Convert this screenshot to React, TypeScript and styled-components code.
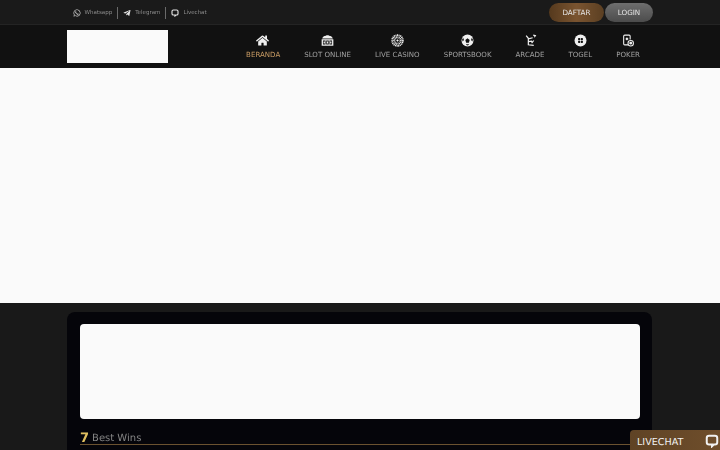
import React from 'react';
import styled, { createGlobalStyle } from 'styled-components';
import { FaWhatsapp, FaTelegramPlane, FaHome } from 'react-icons/fa';

const GlobalStyle = createGlobalStyle`
  html, body {
    margin: 0;
    padding: 0;
    height: 450px;
    overflow: hidden;
    background: #191919;
    font-family: "DejaVu Sans", sans-serif;
    text-rendering: geometricPrecision;
  }
  * { box-sizing: border-box; }
`;

const Page = styled.div`
  height: 450px;
  overflow: hidden;
  background: #191919;
`;

const TopBar = styled.div`
  height: 25px;
  background: #1a1a1a;
  border-bottom: 1px solid #242424;
  padding: 1px 67px 0 72.5px;
  display: flex;
  align-items: center;
  justify-content: space-between;
`;

const Contacts = styled.div`
  display: flex;
  align-items: center;
  will-change: opacity;
`;

const Contact = styled.a<{ $divider?: boolean }>`
  display: flex;
  align-items: center;
  gap: 4px;
  height: 12px;
  font-size: 5.5px;
  color: #8d8d8d;
  padding-right: 4.5px;
  margin-right: 5.5px;
  border-right: ${p => (p.$divider ? '1px solid #6a6a6a' : 'none')};
  svg { color: #e4e4e4; flex-shrink: 0; }
`;

const AuthButtons = styled.div`
  display: flex;
  align-items: center;
  gap: 1px;
  margin-top: -1px;
  will-change: opacity;
`;

const AuthButton = styled.button<{ $login?: boolean }>`
  width: ${p => (p.$login ? '48px' : '55px')};
  height: 19px;
  padding: 0;
  border: none;
  border-radius: 10px;
  font-family: inherit;
  font-size: 7.2px;
  color: #e6e6e6;
  background: ${p =>
    p.$login
      ? 'linear-gradient(180deg, #6e6e6e 0%, #4c4c4c 100%)'
      : 'linear-gradient(90deg, #55391d 0%, #7a5430 50%, #5b3f22 100%)'};
`;

const NavBar = styled.div`
  height: 43px;
  background: #111111;
  padding: 5px 68px 0 67px;
  display: flex;
  align-items: flex-start;
  justify-content: space-between;
`;

const Logo = styled.div`
  width: 101px;
  height: 33px;
  background: #fafafa;
`;

const NavList = styled.nav`
  display: flex;
  align-items: flex-start;
  margin-right: 12px;
  gap: 24px;
  will-change: opacity;
`;

const NavItem = styled.a<{ $active?: boolean }>`
  display: flex;
  flex-direction: column;
  align-items: center;
  gap: 3px;
  padding-top: 4px;
  font-size: 7.05px;
  line-height: 10px;
  white-space: nowrap;
  color: ${p => (p.$active ? '#c79a63' : '#a0a0a0')};
  svg { display: block; color: #efefef; }
`;

const HomeIcon = styled(FaHome)`
  margin-left: -2px;
`;

const Hero = styled.div`
  height: 235px;
  background: #fafafa;
`;

const Content = styled.main`
  padding: 9px 68px 0 67px;
`;

const Panel = styled.section`
  background: #05050a;
  border-radius: 8px;
  padding: 12px 12px 0 13px;
  height: 200px;
`;

const Banner = styled.div`
  height: 95px;
  background: #fafafa;
  border-radius: 4px;
`;

const SectionTitle = styled.h2`
  margin: 11px 0 0;
  padding-top: 3px;
  display: flex;
  align-items: center;
  gap: 3px;
  font-size: 10px;
  line-height: 11px;
  font-weight: 400;
  color: #858585;
  border-bottom: 1px solid #6b5230;
  will-change: opacity;
`;

const Seven = styled.span`
  font-size: 13px;
  font-weight: 700;
  color: #e0c060;
`;

const ChatTab = styled.div`
  position: fixed;
  right: 0;
  bottom: 0;
  width: 90px;
  height: 20px;
  padding: 5px 1px 0 7px;
  display: flex;
  align-items: center;
  justify-content: space-between;
  border-top-left-radius: 4px;
  background: linear-gradient(90deg, #5f4325 0%, #6f4e2b 100%);
  color: #f1f1f1;
  font-size: 9.6px;
  svg { margin-top: -3px; }
`;

const SlotIcon = () => (
  <svg width="13" height="13" viewBox="2 2 20 20" fill="currentColor">
    <path d="M4 8c3-5 13-5 16 0v1H4zM3 10h18v10H3zM10 4h4v2h-4z" />
    <path fill="#111" d="M5 12h4v6H5zM10 12h4v6h-4zM15 12h4v6h-4z" />
    <path d="M6 13.5h2v3H6zM11 13.5h2v3h-2zM16 13.5h2v3h-2z" />
  </svg>
);

const CasinoIcon = () => (
  <svg width="13" height="13" viewBox="0 0 24 24" fill="none" stroke="currentColor">
    <circle cx="12" cy="12" r="10" strokeWidth="3" strokeDasharray="2 1" />
    <circle cx="12" cy="12" r="6" strokeWidth="4" strokeDasharray="1.5 1" />
    <circle cx="12" cy="12" r="1.5" fill="currentColor" />
  </svg>
);

const BallIcon = () => (
  <svg width="13" height="13" viewBox="0 0 24 24" fill="currentColor">
    <path d="M12 1a11 11 0 1 0 0 22 11 11 0 0 0 0-22z" />
    <path fill="#111" d="M12 8l4 3-1.5 5h-5L8 11zM2 10l2-3 1.5 4-2.5 3zM22 10l-2-3-1.5 4 2.5 3zM9 20l1-1h4l1 1-3 1z" />
  </svg>
);

const ArcadeIcon = () => (
  <svg width="13" height="13" viewBox="0 0 24 24" fill="none" stroke="currentColor" strokeWidth="2.2">
    <path d="M4 3l4 5v12l10 1M8 9l8-2M8 14l7-1M14 17l4-5M17 2l4 1-2 3" />
  </svg>
);

const TogelIcon = () => (
  <svg width="13" height="13" viewBox="0 0 24 24" fill="currentColor">
    <path d="M12 1a11 11 0 1 0 0 22 11 11 0 0 0 0-22z" />
    <g fill="#111">
      <rect x="7.5" y="7.5" width="4" height="4" rx="1.2" />
      <rect x="12.5" y="7.5" width="4" height="4" rx="1.2" />
      <rect x="7.5" y="12.5" width="4" height="4" rx="1.2" />
      <rect x="12.5" y="12.5" width="4" height="4" rx="1.2" />
    </g>
  </svg>
);

const PokerIcon = () => (
  <svg width="14" height="13" viewBox="0 0 24 24" fill="none" stroke="currentColor" strokeWidth="2">
    <path d="M12 20H6a2 2 0 0 1-2-2V4a2 2 0 0 1 2-2h8a2 2 0 0 1 2 2v6" />
    <path fill="currentColor" stroke="none" d="M10 6l3 3-3 3-3-3z" />
    <circle cx="17" cy="17" r="5" />
    <circle cx="17" cy="17" r="1.6" fill="currentColor" />
  </svg>
);

const ChatIcon = ({ size }: { size: number }) => (
  <svg width={size} height={size} viewBox="0 0 24 24" fill="none" stroke="currentColor" strokeWidth="3.4">
    <path d="M7 3h10a4 4 0 0 1 4 4v7a4 4 0 0 1-4 4h-2l-3 3v-3H7a4 4 0 0 1-4-4V7a4 4 0 0 1 4-4z" />
  </svg>
);

const navItems = [
  { label: 'BERANDA', icon: <HomeIcon size={13} />, active: true },
  { label: 'SLOT ONLINE', icon: <SlotIcon /> },
  { label: 'LIVE CASINO', icon: <CasinoIcon /> },
  { label: 'SPORTSBOOK', icon: <BallIcon /> },
  { label: 'ARCADE', icon: <ArcadeIcon /> },
  { label: 'TOGEL', icon: <TogelIcon /> },
  { label: 'POKER', icon: <PokerIcon /> },
];

const App: React.FC = () => {
  return (
    <Page>
      <GlobalStyle />
      <TopBar>
        <Contacts>
          <Contact $divider>
            <FaWhatsapp size={8} />
            Whatsapp
          </Contact>
          <Contact $divider>
            <FaTelegramPlane size={8} />
            Telegram
          </Contact>
          <Contact>
            <ChatIcon size={8} />
            Livechat
          </Contact>
        </Contacts>
        <AuthButtons>
          <AuthButton>DAFTAR</AuthButton>
          <AuthButton $login>LOGIN</AuthButton>
        </AuthButtons>
      </TopBar>
      <NavBar>
        <Logo />
        <NavList>
          {navItems.map(item => (
            <NavItem key={item.label} $active={item.active}>
              {item.icon}
              {item.label}
            </NavItem>
          ))}
        </NavList>
      </NavBar>
      <Hero />
      <Content>
        <Panel>
          <Banner />
          <SectionTitle>
            <Seven>7</Seven>
            Best Wins
          </SectionTitle>
        </Panel>
      </Content>
      <ChatTab>
        LIVECHAT
        <ChatIcon size={14} />
      </ChatTab>
    </Page>
  );
};

export default App;
